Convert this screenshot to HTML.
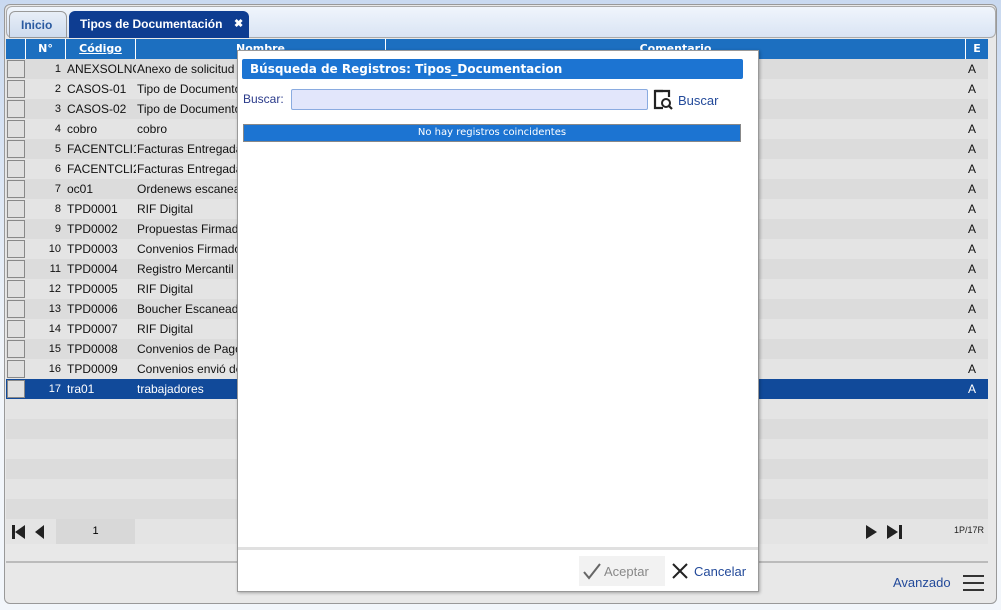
<!DOCTYPE html>
<html><head><meta charset="utf-8"><style>
*{box-sizing:border-box;margin:0;padding:0}
body{width:1001px;height:610px;overflow:hidden;background:linear-gradient(#c9d9f0,#f2f6fb 60%,#f2f6fb);font-family:"Liberation Sans",sans-serif;font-size:12px;position:relative}
.a{position:absolute}
.frame{left:4px;top:4px;width:993px;height:600px;border:1px solid #999;border-radius:6px;background:#e8e8e8;overflow:hidden}
.tabs{left:1px;top:1px;width:990px;height:32px;border:1px solid #aaa;border-radius:6px;background:linear-gradient(#f0f5fc,#d9e4f4)}
.tab{top:6px;height:27px;border-radius:6px 6px 0 0;font-weight:bold;font-size:12px;line-height:26px;padding-left:11px}
.hdr{left:6px;top:39px;width:982px;height:20px;background:#1c6fc0;color:#fff;font-weight:bold;font-size:11px;font-family:"DejaVu Sans",sans-serif}
.hdr div{position:absolute;top:0;height:20px;line-height:20px;text-align:center;border-right:1px solid #fff}
.row{left:6px;width:982px;height:20px;font-size:12px;line-height:20px;color:#111}
.row span{position:absolute;white-space:nowrap;overflow:hidden}
.cb{position:absolute;left:1px;top:1px;width:18px;height:18px;border:1px solid #888;background:#e0e0e0}
.dlg{left:237px;top:50px;width:522px;height:542px;background:#fff;border:1px solid #999;box-shadow:1px 1px 3px rgba(0,0,0,.3)}
.ic{position:absolute;top:586px;height:6px;background:#333}
</style></head><body>
<div class="a frame">
 <div class="a tabs"></div>
 <div class="a tab" style="left:4px;width:58px;background:linear-gradient(#e8eef7,#cfdcee);border:1px solid #999;color:#2a5aa0">Inicio</div>
 <div class="a tab" style="left:64px;width:180px;background:#0e3d91;color:#fff">Tipos de Documentación<span style="position:absolute;left:165px;font-size:11px">✖</span></div>
</div>
<div class="a hdr">
 <div style="left:0;width:20px"></div>
 <div style="left:20px;width:40px">N°</div>
 <div style="left:60px;width:70px;text-decoration:underline">Código</div>
 <div style="left:130px;width:250px">Nombre</div>
 <div style="left:380px;width:580px">Comentario</div>
 <div style="left:960px;width:22px;border:none">E</div>
</div>
<div id="rows"></div>
<script>
var d=[["ANEXSOLNOI","Anexo de solicitud"],["CASOS-01","Tipo de Documento"],["CASOS-02","Tipo de Documento"],["cobro","cobro"],["FACENTCLI1","Facturas Entregada"],["FACENTCLI2","Facturas Entregada"],["oc01","Ordenews escanea"],["TPD0001","RIF Digital"],["TPD0002","Propuestas Firmad"],["TPD0003","Convenios Firmado"],["TPD0004","Registro Mercantil"],["TPD0005","RIF Digital"],["TPD0006","Boucher Escaneado"],["TPD0007","RIF Digital"],["TPD0008","Convenios de Pago"],["TPD0009","Convenios envió de"],["tra01","trabajadores"]];
var h="";
for(var i=0;i<23;i++){var y=59+i*20,bg=i%2?"#e4e4e4":"#dcdcdc",c="#111";
 if(i==16){bg="#114a9a";c="#fff";}
 h+='<div class="a row" style="top:'+y+'px;background:'+bg+';color:'+c+'">';
 if(i<17){h+='<div class="cb"></div><span style="left:20px;width:35px;text-align:right;font-size:11px">'+(i+1)+'</span><span style="left:61px;width:69px">'+d[i][0]+'</span><span style="left:131px">'+d[i][1]+'</span><span style="left:962px">A</span>';}
 h+='</div>';}
document.getElementById("rows").innerHTML=h;
</script>
<div class="a" style="left:6px;top:519px;width:982px;height:25px;background:#e4e4e4"></div>
<div class="a" style="left:56px;top:519px;width:79px;height:25px;background:#d8d8d8;text-align:center;line-height:25px;font-size:11px">1</div>
<svg class="a" style="left:10px;top:523px" width="42" height="18"><path d="M2 2h3v14H2zM5 9l10-7v14z M25 9l9-7v14z" fill="#222"/></svg>
<svg class="a" style="left:864px;top:523px" width="42" height="18"><path d="M2 2l11 7-11 7zM23 2l11 7-11 7zM35 2h3v14h-3z" fill="#222"/></svg>
<div class="a" style="left:954px;top:525px;font-size:9px;color:#222">1P/17R</div>
<div class="a" style="left:6px;top:561px;width:982px;height:2px;background:#bbb"></div>
<div class="ic" style="left:257px;width:18px"></div>
<div class="ic" style="left:360px;width:10px"></div>
<div class="ic" style="left:458px;width:16px"></div>
<div class="ic" style="left:561px;width:10px"></div>
<div class="ic" style="left:662px;width:8px"></div>
<div class="a" style="left:893px;top:575px;font-size:13px;color:#234a9a">Avanzado</div>
<div class="a" style="left:963px;top:575px;width:21px;height:16px;border-top:2px solid #333;border-bottom:2px solid #333"><div style="margin-top:5px;height:2px;background:#333"></div></div>
<div class="a dlg">
 <div class="a" style="left:4px;top:8px;width:501px;height:20px;background:#1c74d2;border-radius:2px;color:#fff;font-weight:bold;font-size:12px;font-family:'DejaVu Sans',sans-serif;line-height:20px;padding-left:8px">Búsqueda de Registros: Tipos_Documentacion</div>
 <div class="a" style="left:5px;top:41px;font-size:12px;color:#2a3a8a">Buscar:</div>
 <div class="a" style="left:53px;top:38px;width:357px;height:21px;background:#e2e6fb;border:1px solid #8aabe0;border-radius:2px"></div>
 <svg class="a" style="left:415px;top:38px" width="22" height="22"><path d="M10 2H2v17h8" stroke="#222" stroke-width="2.2" fill="none"/><path d="M2 2h14v6" stroke="#222" stroke-width="2.2" fill="none"/><circle cx="13" cy="14" r="4" stroke="#222" stroke-width="2" fill="none"/><path d="M16 17l3 3" stroke="#222" stroke-width="2.2"/></svg>
 <div class="a" style="left:440px;top:42px;font-size:13px;color:#234a9a">Buscar</div>
 <div class="a" style="left:5px;top:73px;width:498px;height:18px;background:#1c74d2;border:1px solid #888;color:#fff;font-size:10px;font-family:'DejaVu Sans',sans-serif;text-align:center;line-height:16px">No hay registros coincidentes</div>
 <div class="a" style="left:0;top:496px;width:520px;height:3px;background:#e0e0e0"></div>
 <div class="a" style="left:341px;top:505px;width:86px;height:30px;background:#f2f2f2"></div>
 <svg class="a" style="left:344px;top:511px" width="20" height="18"><path d="M2 10l5 6L18 2" stroke="#666" stroke-width="2" fill="none"/></svg>
 <div class="a" style="left:366px;top:513px;font-size:13px;color:#888">Aceptar</div>
 <svg class="a" style="left:433px;top:511px" width="18" height="18"><path d="M2 2l14 14M16 2L2 16" stroke="#222" stroke-width="2"/></svg>
 <div class="a" style="left:456px;top:513px;font-size:13px;color:#234a9a">Cancelar</div>
</div>
</body></html>
